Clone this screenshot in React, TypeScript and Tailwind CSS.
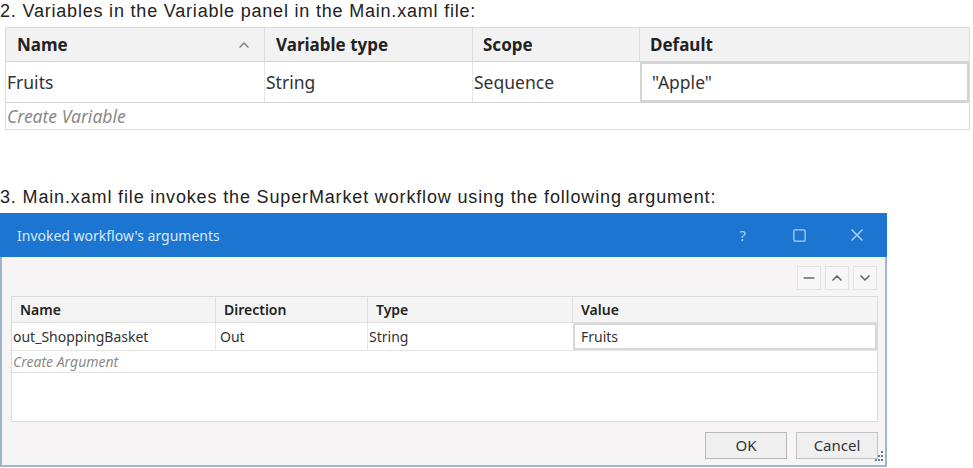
import { ChevronUp, ChevronDown, Minus, X, Square } from "lucide-react";

const ui = { fontFamily: '"Noto Sans", "Open Sans", sans-serif' };
const arial = { fontFamily: '"Liberation Sans", Arial, sans-serif' };

function VariablesTable() {
  return (
    <div className="ml-[5px] mt-[5px] w-[965px] border border-[#dcdcdc] bg-white text-[17px] text-[#222]" style={ui}>
      <div className="flex h-[34px] border-b border-[#d6d6d6] bg-[#f2f2f2] font-bold">
        <div className="flex w-[259px] items-center justify-between border-r border-[#dcdcdc] pl-[11px] pr-[12px]">
          <span>Name</span>
          <ChevronUp className="h-4 w-4 text-[#777]" strokeWidth={2} />
        </div>
        <div className="flex w-[208px] items-center border-r border-[#dcdcdc] pl-[11px]">Variable type</div>
        <div className="flex w-[167px] items-center border-r border-[#dcdcdc] pl-[10px]">Scope</div>
        <div className="flex flex-1 items-center pl-[10px]">Default</div>
      </div>
      <div className="flex h-[41px] border-b border-[#d6d6d6] text-[17.5px] font-normal text-[#333]">
        <div className="flex w-[259px] items-center border-r border-[#e4e4e4] pl-[1px]">Fruits</div>
        <div className="flex w-[208px] items-center border-r border-[#e4e4e4] pl-[1px]">String</div>
        <div className="flex w-[167px] items-center pl-[1px]">Sequence</div>
        <div className="flex flex-1 items-center border-2 border-[#d4d4d4] pl-[10px]">"Apple"</div>
      </div>
      <div className="flex h-[26px] items-center pl-[1px] text-[17.5px] italic text-[#8a8a8a]">Create Variable</div>
    </div>
  );
}

function SmallBtn({ children }: { children: React.ReactNode }) {
  return (
    <div className="flex h-[24px] w-[24px] items-center justify-center border border-[#e2e2e2] bg-[#f7f7f7] text-[#666]">
      {children}
    </div>
  );
}

function ArgumentsDialog() {
  return (
    <div className="mt-[5px] flex h-[254px] w-[887px] flex-col border-x-2 border-b-2 border-[#9fb6cf] bg-[#f6f4f4]" style={ui}>
      <div className="-mx-[2px] flex h-[44px] items-center justify-between bg-[#1c76d1] pl-[17px] pr-[20px]">
        <span className="text-[14px] text-[#d8e8fa]">Invoked workflow's arguments</span>
        <div className="flex items-center gap-[40px] text-[#a9d2f7]">
          <span className="mr-[6px] text-[15px]">?</span>
          <Square className="h-[15px] w-[15px]" strokeWidth={2} />
          <X className="h-[20px] w-[20px]" strokeWidth={1.8} />
        </div>
      </div>
      <div className="flex justify-end gap-[4px] pr-[8px] pt-[9px]">
        <SmallBtn>
          <Minus className="h-4 w-4" strokeWidth={2.5} />
        </SmallBtn>
        <SmallBtn>
          <ChevronUp className="h-4 w-4" strokeWidth={2.5} />
        </SmallBtn>
        <SmallBtn>
          <ChevronDown className="h-4 w-4" strokeWidth={2.5} />
        </SmallBtn>
      </div>
      <div className="ml-[9px] mt-[6px] h-[126px] w-[867px] border border-[#dadada] bg-white text-[14px] text-[#333]">
        <div className="flex h-[26px] border-b border-[#e0e0e0] bg-[#f4f4f4] font-semibold text-[#222]">
          <div className="flex w-[204px] items-center border-r border-[#e0e0e0] pl-[8px]">Name</div>
          <div className="flex w-[152px] items-center border-r border-[#e0e0e0] pl-[8px]">Direction</div>
          <div className="flex w-[205px] items-center border-r border-[#e0e0e0] pl-[8px]">Type</div>
          <div className="flex flex-1 items-center pl-[8px]">Value</div>
        </div>
        <div className="flex h-[28px] border-b border-[#e4e4e4]">
          <div className="flex w-[204px] items-center border-r border-[#e8e8e8] pl-[1px]">out_ShoppingBasket</div>
          <div className="flex w-[152px] items-center border-r border-[#e8e8e8] pl-[4px]">Out</div>
          <div className="flex w-[205px] items-center pl-[1px]">String</div>
          <div className="flex flex-1 items-center border-2 border-[#d8d8d8] pl-[6px]">Fruits</div>
        </div>
        <div className="flex h-[22px] items-center border-b border-[#e4e4e4] pl-[1px] italic text-[#8a8a8a]">
          Create Argument
        </div>
      </div>
      <div className="mt-[10px] flex items-start justify-end gap-[9px] pr-[7px]">
        <div className="flex h-[27px] w-[82px] items-center justify-center border border-[#b8b8b8] bg-[#efefef] text-[15px] text-[#333]">
          OK
        </div>
        <div className="relative flex h-[27px] w-[82px] items-center justify-center border border-[#c4c4c4] bg-[#efefef] text-[15px] text-[#333]">
          Cancel
          <svg className="absolute -bottom-[4px] -right-[7px]" width="12" height="12" viewBox="0 0 12 12">
            <g fill="#5b7fa8">
              <rect x="9" y="1" width="2" height="2" />
              <rect x="6" y="5" width="2" height="2" />
              <rect x="9" y="5" width="2" height="2" />
              <rect x="3" y="9" width="2" height="2" />
              <rect x="6" y="9" width="2" height="2" />
              <rect x="9" y="9" width="2" height="2" />
            </g>
          </svg>
        </div>
      </div>
    </div>
  );
}

export default function App() {
  return (
    <div className="h-[468px] w-[973px] overflow-hidden bg-white">
      <p className="h-[22px] text-[18px] leading-[22px] tracking-[0.8px] text-[#222]" style={arial}>
        2. Variables in the Variable panel in the Main.xaml file:
      </p>
      <VariablesTable />
      <p className="mt-[56px] h-[22px] text-[18px] leading-[22px] tracking-[0.85px] text-[#222]" style={arial}>
        3. Main.xaml file invokes the SuperMarket workflow using the following argument:
      </p>
      <ArgumentsDialog />
    </div>
  );
}
